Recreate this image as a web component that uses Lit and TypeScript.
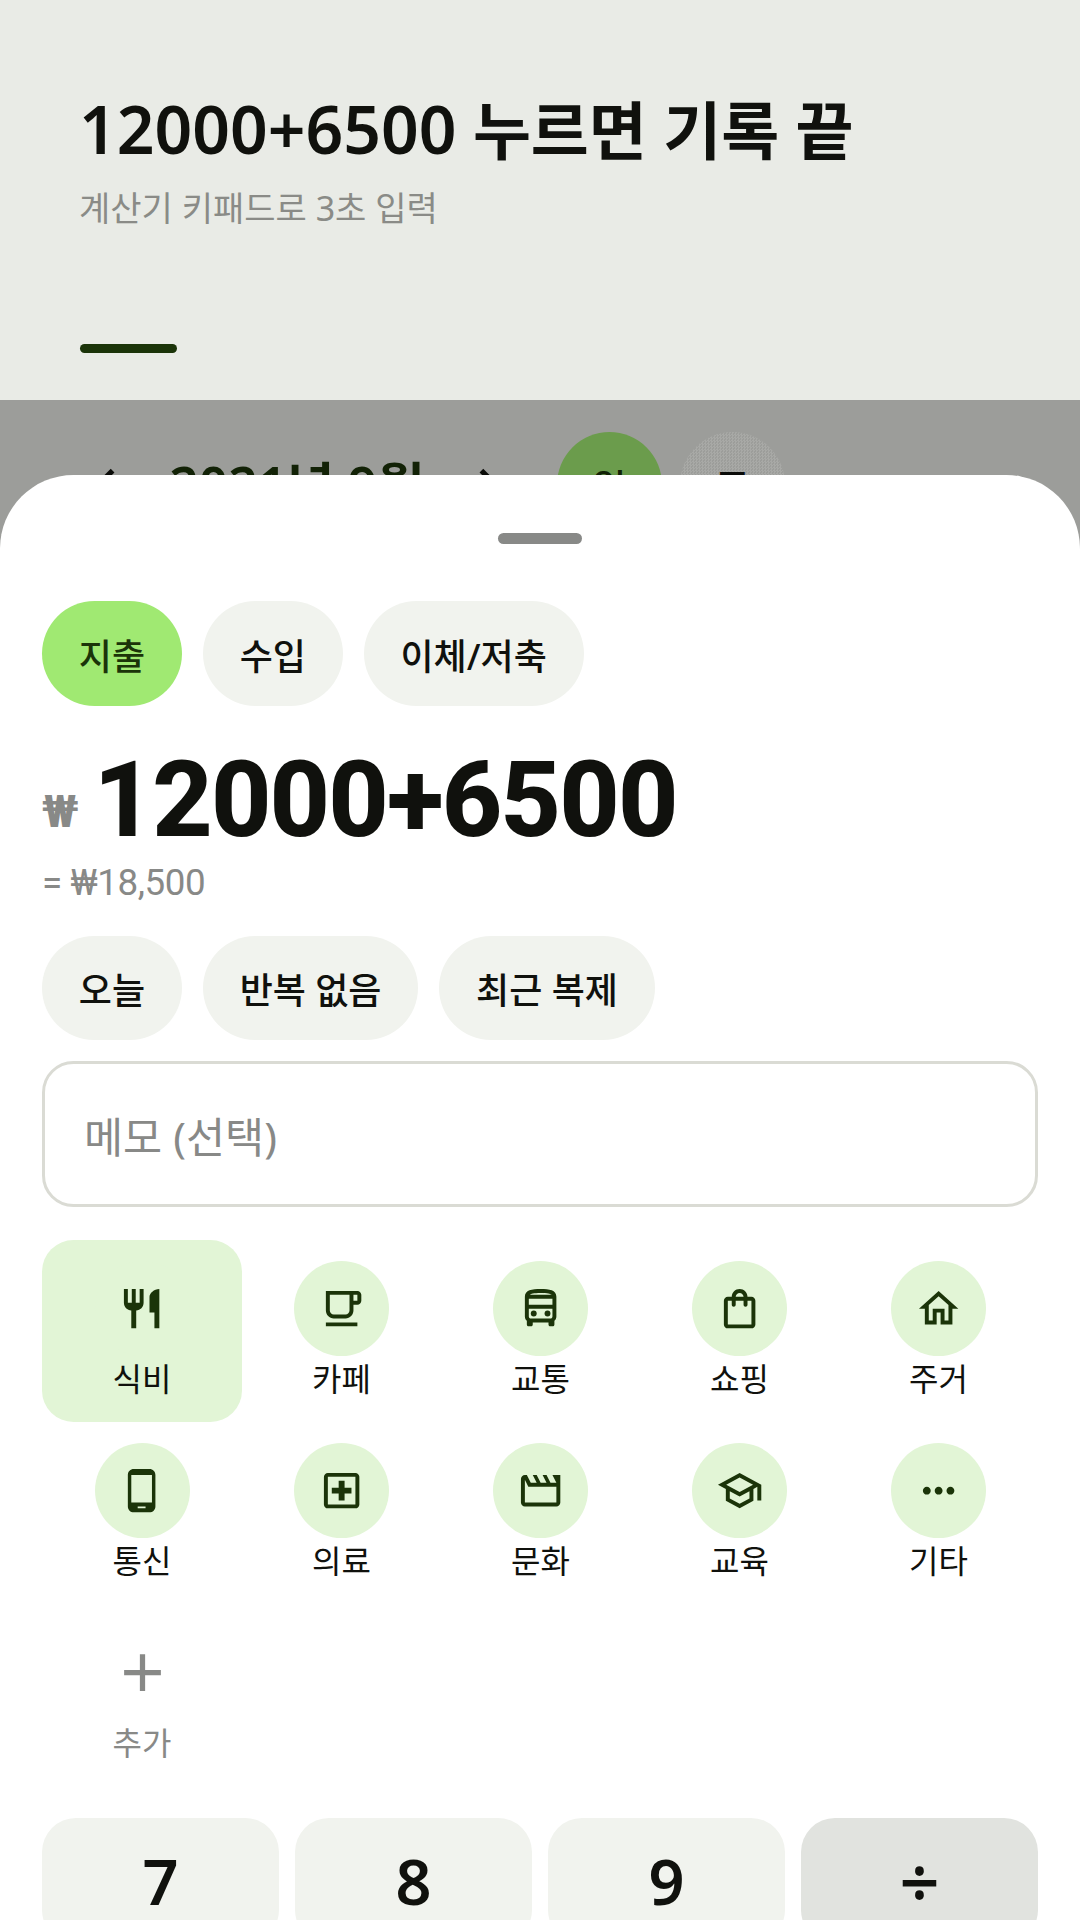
import { LitElement, html, css, svg } from "lit";
import { customElement } from "lit/decorators.js";

const ICONS: Record<string, any> = {
  restaurant: svg`<path d="M11 9H9V2H7v7H5V2H3v7c0 2.12 1.66 3.84 3.75 3.97V22h2.5v-9.03C11.34 12.84 13 11.12 13 9V2h-2v7zm5-3v8h2.5v8H21V2c-2.76 0-5 2.24-5 4z"/>`,
  cafe: svg`<path d="M20 3H4v10c0 2.21 1.79 4 4 4h6c2.21 0 4-1.79 4-4v-3h2c1.11 0 2-.9 2-2V5c0-1.11-.89-2-2-2zm-4 10c0 1.1-.9 2-2 2H8c-1.1 0-2-.9-2-2V5h10v8zm4-5h-2V5h2v3zM4 19h16v2H4z"/>`,
  bus: svg`<path d="M12 2c-4.42 0-8 .5-8 4v10c0 .88.39 1.67 1 2.22V20c0 .55.45 1 1 1h1c.55 0 1-.45 1-1v-1h8v1c0 .55.45 1 1 1h1c.55 0 1-.45 1-1v-1.78c.61-.55 1-1.34 1-2.22V6c0-3.5-3.58-4-8-4zm5.66 2.99H6.43C6.98 4.46 8.43 4 12 4s5.02.46 5.66.99zM18 6.99V10H6V6.99h12zm-.34 9.74l-.29.27H6.63l-.29-.27C6.21 16.62 6 16.37 6 16v-4h12v4c0 .37-.21.62-.34.73z"/><circle cx="8.5" cy="14.5" r="1.5"/><circle cx="15.5" cy="14.5" r="1.5"/>`,
  bag: svg`<path d="M18 6h-2c0-2.21-1.79-4-4-4S8 3.79 8 6H6c-1.1 0-2 .9-2 2v12c0 1.1.9 2 2 2h12c1.1 0 2-.9 2-2V8c0-1.1-.9-2-2-2zm-6-2c1.1 0 2 .9 2 2h-4c0-1.1.9-2 2-2zm6 16H6V8h2v2c0 .55.45 1 1 1s1-.45 1-1V8h4v2c0 .55.45 1 1 1s1-.45 1-1V8h2v12z"/>`,
  home: svg`<path d="M12 5.69l5 4.5V18h-2v-6H9v6H7v-7.81l5-4.5M12 3L2 12h3v8h6v-6h2v6h6v-8h3L12 3z"/>`,
  phone: svg`<path d="M16 1H8C6.34 1 5 2.34 5 4v16c0 1.66 1.34 3 3 3h8c1.66 0 3-1.34 3-3V4c0-1.66-1.34-3-3-3zm-2 20h-4v-1h4v1zm3.25-3H6.75V4h10.5v14z"/>`,
  hospital: svg`<path d="M19 3H5c-1.1 0-1.99.9-1.99 2L3 19c0 1.1.9 2 2 2h14c1.1 0 2-.9 2-2V5c0-1.1-.9-2-2-2zm0 16H5V5h14v14zm-8.5-2h3v-3.5H17v-3h-3.5V7h-3v3.5H7v3h3.5z"/>`,
  movie: svg`<path d="M4 6.47L5.76 10H20v8H4V6.47M22 4h-4l2 4h-3l-2-4h-2l2 4h-3l-2-4H8l2 4H7L5 4H4c-1.1 0-1.99.9-1.99 2L2 18c0 1.1.9 2 2 2h16c1.1 0 2-.9 2-2V4z"/>`,
  school: svg`<path d="M12 3L1 9l4 2.18v6L12 21l7-3.82v-6l2-1.09V17h2V9L12 3zm6.82 6L12 12.72 5.18 9 12 5.28 18.82 9zM17 15.99l-5 2.73-5-2.73v-3.72L12 15l5-2.73v3.72z"/>`,
  more: svg`<path d="M6 10c-1.1 0-2 .9-2 2s.9 2 2 2 2-.9 2-2-.9-2-2-2zm12 0c-1.1 0-2 .9-2 2s.9 2 2 2 2-.9 2-2-.9-2-2-2zm-6 0c-1.1 0-2 .9-2 2s.9 2 2 2 2-.9 2-2-.9-2-2-2z"/>`,
};

const CATEGORIES = [
  ["식비", "restaurant"], ["카페", "cafe"], ["교통", "bus"], ["쇼핑", "bag"], ["주거", "home"],
  ["통신", "phone"], ["의료", "hospital"], ["문화", "movie"], ["교육", "school"], ["기타", "more"],
];

@customElement("app-root")
export class AppRoot extends LitElement {
  static styles = css`
    :host {
      display: block;
      width: 1080px;
      height: 1920px;
      overflow: hidden;
      font-family: "Noto Sans", "Noto Sans CJK KR", sans-serif;
      color: #10110d;
      background: #fff;
    }
    .root { display: flex; flex-direction: column; height: 1920px; }
    .promo {
      height: 400px;
      box-sizing: border-box;
      background: #e9ebe6;
      padding: 89px 79px 0;
      display: flex;
      flex-direction: column;
    }
    .promo h1 { margin: 0; font-size: 63px; line-height: 78px; font-weight: 600; white-space: nowrap; }
    .promo h1 .num { font-size: 66px; }
    .promo p { margin: 14px 0 0; font-size: 34px; line-height: 50px; color: #8a8b87; }
    .dash { width: 97px; height: 9px; border-radius: 5px; background: #1b3409; margin: 111px 0 0 1px; }

    .phone { flex: 1; position: relative; overflow: hidden; background: #e9ebe6; }
    .month { display: flex; align-items: center; padding: 32px 0 0 74px; height: 105px; }
    .chev { width: 63px; height: 63px; fill: #10110d; flex: none; }
    .month-title { width: 320px; text-align: center; font-size: 51.5px; line-height: 70px; font-weight: 600; color: #1b3409; }
    .day {
      width: 105px; height: 105px; border-radius: 50%; margin-left: 18px;
      display: flex; align-items: center; justify-content: center;
      font-size: 36.75px; font-weight: 500;
      background: repeating-conic-gradient(#fbfcf8 0 25%, #e9ebe6 0 50%) 0 0 / 3px 3px;
    }
    .day.on { background: #a0e972; color: #1b3409; margin-left: 37px; }
    .scrim { position: absolute; inset: 0; background: rgba(0, 0, 0, 0.33); }

    .sheet {
      position: absolute;
      top: 75px; left: 0; right: 0; bottom: 0;
      background: #fff;
      border-radius: 73.5px 73.5px 0 0;
      padding: 58px 42px 0;
      overflow: hidden;
    }
    .handle { width: 84px; height: 11px; border-radius: 6px; background: #888987; margin: 0 auto; }
    .chips { display: flex; gap: 21px; }
    .chips.type { margin-top: 57px; }
    .chips.opts { margin-top: 32px; }
    .chip {
      height: 104.5px; box-sizing: border-box; display: flex; align-items: center;
      padding: 2px 36.8px 0; border-radius: 52.5px; background: #f1f3ee;
      font-size: 36px; font-weight: 500; white-space: nowrap;
    }
    .chip.on { background: #a0e972; color: #1b3409; }

    .amount { display: flex; align-items: center; gap: 15px; margin-top: 33px; height: 123px; font-family: Roboto, sans-serif; font-weight: 800; }
    .cur { font-size: 44px; color: #888987; padding-top: 24px; }
    .val { font-size: 105px; line-height: 123px; letter-spacing: -1.85px; }
    .sum { margin-top: -1px; font-family: Roboto, sans-serif; font-size: 36.75px; line-height: 43px; letter-spacing: -0.4px; color: #888987; }

    .memo { margin-top: 21px; height: 146px; box-sizing: border-box; border: 3px solid #dadbd4; border-radius: 31.5px; display: flex; align-items: center; padding-left: 39px; font-size: 42.5px; color: #888987; }

    .grid { margin-top: 33px; display: grid; grid-template-columns: 200px repeat(4, 199px); }
    .cat { height: 182px; box-sizing: border-box; padding-top: 21px; display: flex; flex-direction: column; align-items: center; border-radius: 31.5px; font-size: 32px; }
    .cat.on { background: #e2f5d6; }
    .disc { width: 95px; height: 95px; border-radius: 50%; background: #e2f5d6; display: flex; align-items: center; justify-content: center; flex: none; }
    .disc.plain { background: none; }
    .disc svg { width: 47.25px; height: 47.25px; fill: #1b3409; }
    .disc.plain svg { width: 63px; height: 63px; fill: #888987; }
    .cat span { line-height: 46px; }
    .cat.add { color: #888987; }

    .keys { margin-top: 32px; display: grid; grid-template-columns: repeat(4, 237px); gap: 16px; }
    .key { height: 126px; border-radius: 34px; background: #f1f3ee; display: flex; align-items: center; justify-content: center; font-size: 63px; line-height: 86px; font-weight: 600; }
    .key.op { background: #e1e3df; font-size: 70px; }
  `;

  render() {
    return html`
      <div class="root">
        <div class="promo">
          <h1><span class="num">12000+6500</span> 누르면 기록 끝</h1>
          <p>계산기 키패드로 3초 입력</p>
          <div class="dash"></div>
        </div>
        <div class="phone">
          <div class="month">
            <svg class="chev" viewBox="0 0 24 24"><path d="M15.41 7.41L14 6l-6 6 6 6 1.41-1.41L10.83 12z"/></svg>
            <div class="month-title">2021년 9월</div>
            <svg class="chev" viewBox="0 0 24 24"><path d="M10 6L8.59 7.41 13.17 12l-4.58 4.59L10 18l6-6z"/></svg>
            <div class="day on">일</div>
            <div class="day">주</div>
          </div>
          <div class="scrim"></div>
          <div class="sheet">
            <div class="handle"></div>
            <div class="chips type">
              <div class="chip on">지출</div>
              <div class="chip">수입</div>
              <div class="chip">이체/저축</div>
            </div>
            <div class="amount">
              <span class="cur">₩</span>
              <span class="val">12000+6500</span>
            </div>
            <div class="sum">= ₩18,500</div>
            <div class="chips opts">
              <div class="chip">오늘</div>
              <div class="chip">반복 없음</div>
              <div class="chip">최근 복제</div>
            </div>
            <div class="memo">메모 (선택)</div>
            <div class="grid">
              ${CATEGORIES.map(([label, icon], i) => html`
                <div class="cat ${i === 0 ? "on" : ""}">
                  <div class="disc"><svg viewBox="0 0 24 24">${ICONS[icon]}</svg></div>
                  <span>${label}</span>
                </div>`)}
              <div class="cat add">
                <div class="disc plain"><svg viewBox="0 0 24 24"><path d="M19 13h-6v6h-2v-6H5v-2h6V5h2v6h6v2z"/></svg></div>
                <span>추가</span>
              </div>
            </div>
            <div class="keys">
              <div class="key">7</div>
              <div class="key">8</div>
              <div class="key">9</div>
              <div class="key op">÷</div>
            </div>
          </div>
        </div>
      </div>
    `;
  }
}
